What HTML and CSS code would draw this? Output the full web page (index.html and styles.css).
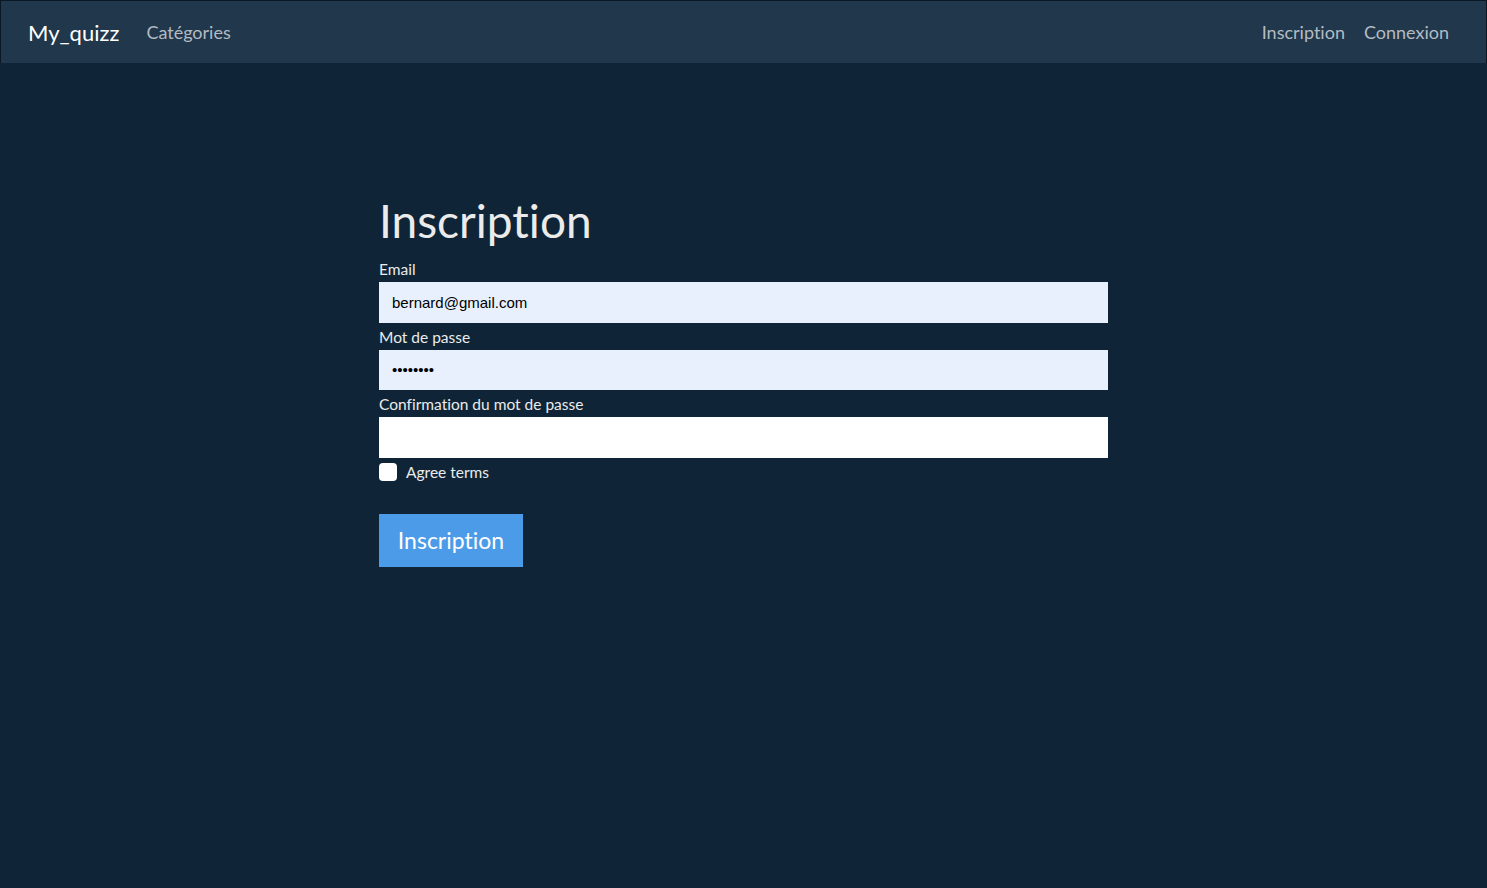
FILE: index.html
```html
<!DOCTYPE html>
<html lang="fr">
<head>
<meta charset="utf-8">
<title>My_quizz</title>
<link rel="stylesheet" href="styles.css">
</head>
<body>
<nav class="navbar">
  <div class="nav-left">
    <a class="brand" href="#">My_quizz</a>
    <a class="nav-link" href="#">Catégories</a>
  </div>
  <div class="nav-right">
    <a class="nav-link" href="#">Inscription</a>
    <a class="nav-link" href="#">Connexion</a>
  </div>
</nav>
<main class="main">
  <form class="form">
    <h1 class="title">Inscription</h1>
    <div class="field">
      <label class="label" for="email">Email</label>
      <input class="input filled" id="email" type="text" value="bernard@gmail.com">
    </div>
    <div class="field">
      <label class="label" for="pw">Mot de passe</label>
      <input class="input filled" id="pw" type="password" value="bernard1">
    </div>
    <div class="field">
      <label class="label" for="pw2">Confirmation du mot de passe</label>
      <input class="input" id="pw2" type="password">
    </div>
    <div class="check-row">
      <span class="checkbox"></span>
      <span class="check-label">Agree terms</span>
    </div>
    <button class="btn" type="button">Inscription</button>
  </form>
</main>
</body>
</html>
```

FILE: styles.css
```css
* { box-sizing: border-box; }
html, body { margin: 0; padding: 0; }
body {
  background: #0f2537;
  color: #ebebeb;
  font-family: Lato, "Open Sans", sans-serif;
  font-size: 15.5px;
  font-variant-ligatures: none;
  min-height: 888px;
}
.navbar {
  display: flex;
  justify-content: space-between;
  align-items: center;
  height: 63px;
  background: #20374c;
  border: 1px solid #0a1824;
  border-bottom: none;
  padding: 0 37px 0 27px;
}
.nav-left, .nav-right { display: flex; align-items: center; }
.brand {
  color: #ffffff;
  font-size: 22px;
  text-decoration: none;
  margin-right: 27px;
  padding-top: 1px;
}
.nav-link {
  color: #b4bbc2;
  font-size: 18px;
  text-decoration: none;
}
.nav-right .nav-link { margin-left: 19px; }
.main {
  display: flex;
  justify-content: center;
  padding-top: 130px;
}
.form {
  width: 729px;
  display: flex;
  flex-direction: column;
}
.title {
  font-weight: 400;
  font-size: 46px;
  line-height: 55px;
  margin: 0 0 7px 0;
  color: #ebebeb;
}
.field { display: flex; flex-direction: column; }
.label {
  font-size: 15.5px;
  line-height: 22px;
  padding-top: 3px;
  margin-bottom: 2px;
}
.input {
  height: 40.5px;
  border: none;
  border-radius: 0;
  background: #ffffff;
  padding: 0 13px;
  font-family: "Liberation Sans", Arial, sans-serif;
  font-size: 15px;
  color: #000;
  outline: none;
}
.input.filled { background: #e8f0fe; }
.check-row {
  display: flex;
  align-items: center;
  margin-top: 5px;
  height: 18px;
}
.checkbox {
  width: 18px;
  height: 18px;
  background: #ffffff;
  border-radius: 4px;
  margin-right: 9px;
}
.check-label { font-size: 15.5px; line-height: 18px; }
.btn {
  align-self: flex-start;
  margin-top: 33px;
  height: 53px;
  width: 144px;
  padding: 0;
  background: #4c9be8;
  color: #ffffff;
  border: none;
  border-radius: 0;
  font-family: Lato, "Open Sans", sans-serif;
  font-size: 23px;
  font-variant-ligatures: none;
}
```
